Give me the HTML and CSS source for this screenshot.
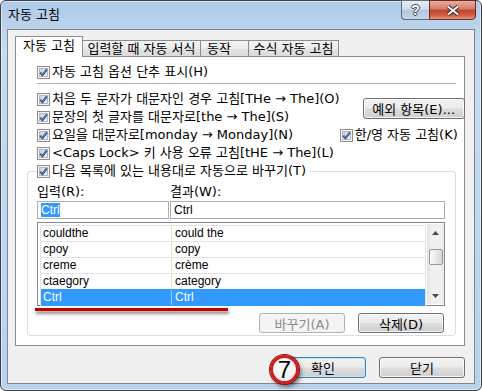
FILE: index.html
```html
<!DOCTYPE html>
<html lang="ko">

<head>
    <meta charset="UTF-8">
    <title>자동 고침</title>
    <link rel="stylesheet" href="styles.css">
</head>

<body>
    <!-- shared checkbox glyph -->
    <svg class="defs" aria-hidden="true">
        <defs>
            <linearGradient id="cbfill" x1="0" y1="0" x2="1" y2="1">
                <stop offset="0" stop-color="#c9ced4" />
                <stop offset="1" stop-color="#f7f7f7" />
            </linearGradient>
            <symbol id="cb" viewBox="0 0 13 13">
                <rect x="0.5" y="0.5" width="12" height="12" fill="#f4f4f4" stroke="#8e8f8f" />
                <rect x="2.5" y="2.5" width="8" height="8" fill="url(#cbfill)" stroke="#b4b9be" />
                <path d="M3.3 6.6 L5.4 9.1 L9.9 3.4" fill="none" stroke="#2f4f90" stroke-width="2.2" stroke-linejoin="round" />
                <path d="M3.8 6.7 L5.4 8.5 L9.5 3.7" fill="none" stroke="#6d9be6" stroke-width="0.8" />
            </symbol>
        </defs>
    </svg>

    <div class="window">
        <!-- Title Bar -->
        <div class="titlebar">
            <span class="title">자동 고침</span>
            <div class="caption">
                <span class="cap-btn help">?</span>
                <span class="cap-btn close">
                    <svg width="14" height="11" viewBox="0 0 14 11">
                        <path d="M2 1.5 L12 9.5 M12 1.5 L2 9.5" stroke="#3d2723" stroke-width="4" />
                        <path d="M2 1.5 L12 9.5 M12 1.5 L2 9.5" stroke="#fff" stroke-width="2" />
                    </svg>
                </span>
            </div>
        </div>

        <div class="client">
            <!-- Tabs -->
            <div class="tabs">
                <div class="tab active t1">자동 고침</div>
                <div class="tab t2">입력할 때 자동 서식</div>
                <div class="tab t3">동작</div>
                <div class="tab t4">수식 자동 고침</div>
            </div>

            <div class="panel">
                <label class="check first"><svg class="cb"><use href="#cb" /></svg>자동 고침 옵션 단추 표시(H)</label>
                <div class="sep"></div>

                <div class="opts">
                    <label class="check r1"><svg class="cb"><use href="#cb" /></svg>처음 두 문자가 대문자인 경우 고침[THe → The](O)</label>
                    <label class="check r2"><svg class="cb"><use href="#cb" /></svg>문장의 첫 글자를 대문자로[the → The](S)</label>
                    <label class="check r3"><svg class="cb"><use href="#cb" /></svg>요일을 대문자로[monday → Monday](N)</label>
                    <label class="check r4"><svg class="cb"><use href="#cb" /></svg>&lt;Caps Lock&gt; 키 사용 오류 고침[tHE → The](L)</label>
                    <button class="btn except">예외 항목(E)...</button>
                    <label class="check hanyoung"><svg class="cb"><use href="#cb" /></svg>한/영 자동 고침(K)</label>
                </div>

                <!-- Replace list group -->
                <fieldset class="group">
                    <legend><label class="check"><svg class="cb"><use href="#cb" /></svg>다음 목록에 있는 내용대로 자동으로 바꾸기(T)</label></legend>

                    <div class="fields">
                        <div class="field-label">입력(R):</div>
                        <div class="field-label second">결과(W):</div>
                        <div class="textbox"><span class="sel">Ctrl</span></div>
                        <div class="textbox second">Ctrl</div>
                    </div>

                    <div class="listbox">
                        <div class="list-area">
                            <div class="list">
                                <div class="row"><span>couldthe</span><span>could the</span></div>
                                <div class="row"><span>cpoy</span><span>copy</span></div>
                                <div class="row"><span>creme</span><span>crème</span></div>
                                <div class="row"><span>ctaegory</span><span>category</span></div>
                                <div class="row selected"><span>Ctrl</span><span>Ctrl</span></div>
                            </div>
                        </div>
                        <div class="scrollbar">
                            <div class="sb-btn">
                                <svg width="7" height="4" viewBox="0 0 7 4"><path d="M0 4 L3.5 0 L7 4 Z" fill="#4a4a4a" /></svg>
                            </div>
                            <div class="sb-thumb"></div>
                            <div class="sb-btn">
                                <svg width="7" height="4" viewBox="0 0 7 4"><path d="M0 0 L3.5 4 L7 0 Z" fill="#4a4a4a" /></svg>
                            </div>
                        </div>
                        <div class="mark"></div>
                    </div>

                    <div class="group-btns">
                        <button class="btn" disabled>바꾸기(A)</button>
                        <button class="btn">삭제(D)</button>
                    </div>
                </fieldset>
            </div>

            <!-- Dialog buttons -->
            <div class="footer">
                <div class="ok-wrap">
                    <button class="btn default">확인</button>
                    <span class="badge">7</span>
                </div>
                <button class="btn">닫기</button>
            </div>
        </div>
    </div>
</body>

</html>
```

FILE: styles.css
```css
* {
    box-sizing: border-box;
}

/* Base */
body {
    margin: 0;
    font-family: "DejaVu Sans", "Noto Sans CJK KR", sans-serif;
    font-size: 13px;
    color: #000;
    background: #fff;
}

.defs {
    position: absolute;
    width: 0;
    height: 0;
}

/* Window frame */
.window {
    width: 482px;
    height: 391px;
    border: 1px solid #3a3f47;
    border-radius: 6px;
    padding: 0 6px 6px;
    background: linear-gradient(180deg, #aecae8 0%, #c5dbf1 12%, #bed6ef 60%, #b9d2ec 100%);
    box-shadow: inset 0 0 0 1px rgba(255, 255, 255, 0.55);
}

.titlebar {
    height: 28px;
    display: flex;
    justify-content: space-between;
    align-items: flex-start;
}

.title {
    line-height: 28px;
    padding-left: 1px;
}

.caption {
    display: flex;
    margin-top: -1px;
    margin-right: -1px;
}

.cap-btn {
    height: 20px;
    display: flex;
    align-items: center;
    justify-content: center;
    border: 1px solid #5d6c80;
}

.help {
    width: 28px;
    border-right: none;
    border-radius: 0 0 0 4px;
    background: linear-gradient(180deg, #e6eef7 0%, #cfdceb 45%, #b4c7dd 52%, #c4d6ea 100%);
    color: #fff;
    font-family: "Liberation Sans", sans-serif;
    font-weight: bold;
    font-size: 14px;
    text-shadow: 1px 0 #3e4858, -1px 0 #3e4858, 0 1px #3e4858, 0 -1px #3e4858;
}

.close {
    width: 47px;
    border-color: #6b2b22;
    border-radius: 0 0 4px 0;
    background: linear-gradient(180deg, #e9ab9d 0%, #d7806f 42%, #c3432b 52%, #cf5e45 80%, #e39a82 100%);
}

/* Client area */
.client {
    height: 355px;
    border: 1px solid #7b8795;
    background: #f0f0f0;
    padding: 6px 9px 0 7px;
}

/* Tabs */
.tabs {
    display: flex;
    align-items: flex-end;
    height: 21px;
    margin-bottom: -1px;
    position: relative;
    z-index: 1;
}

.tab {
    height: 17px;
    border: 1px solid #898c95;
    margin-left: -1px;
    background: linear-gradient(180deg, #f3f3f3 0%, #ececec 50%, #e2e2e2 51%, #dcdcdc 100%);
    line-height: 15px;
    text-align: center;
    white-space: nowrap;
}

.tab.active {
    height: 21px;
    margin-left: 0;
    border-bottom: none;
    background: #fff;
    line-height: 17px;
    position: relative;
    z-index: 2;
}

.t1 { width: 68px; }
.t2 { width: 119px; }
.t3 { width: 49px; padding-right: 11px; }
.t4 { width: 91px; }

.panel {
    width: 450px;
    height: 290px;
    border: 1px solid #898c95;
    background: #fff;
    padding: 6px 8px 0 11px;
}

/* Checkboxes */
.check {
    display: flex;
    align-items: center;
    height: 18px;
    line-height: 18px;
    white-space: nowrap;
}

.cb {
    width: 13px;
    height: 13px;
    flex: none;
    margin-right: 2px;
}

.check.first {
    margin-left: 10px;
}

.sep {
    height: 1px;
    background: #b4b4b4;
    margin: 2px 0 6px 10px;
}

.opts {
    display: grid;
    grid-template-columns: 1fr 126px;
    grid-auto-rows: 18px;
    margin-left: 10px;
}

.r1 { grid-column: 1; grid-row: 1; }
.r2 { grid-column: 1; grid-row: 2; }
.r3 { grid-column: 1; grid-row: 3; }
.r4 { grid-column: 1; grid-row: 4; }

.except {
    grid-column: 2;
    grid-row: 1 / span 2;
    align-self: center;
    justify-self: end;
    width: 102px;
    margin-right: 1px;
}

.hanyoung {
    grid-column: 2;
    grid-row: 3;
}

/* Buttons */
.btn {
    font: inherit;
    color: #000;
    height: 21px;
    padding: 0;
    border: 1px solid #707070;
    border-radius: 3px;
    background: linear-gradient(180deg, #f2f2f2 0%, #ebebeb 48%, #dddddd 52%, #cfcfcf 100%);
    box-shadow: inset 0 0 0 1px rgba(255, 255, 255, 0.75);
}

.btn:disabled {
    color: #8a8a8a;
    border-color: #adb2b5;
    background: #f4f4f4;
    box-shadow: none;
}

.btn.default {
    border-color: #3c7fb1;
    box-shadow: inset 0 0 0 1px #bfe6fb;
}

/* Group box */
.group {
    margin: 0;
    min-inline-size: 0;
    border: 1px solid #d5dfe5;
    border-radius: 3px;
    padding: 0 10px 2px 9px;
}

.group legend {
    padding: 0 4px 0 0;
}

.fields {
    display: grid;
    grid-template-columns: 132px 1fr;
    grid-template-rows: 16px 18px;
    row-gap: 1px;
    margin-top: 4px;
}

.field-label {
    line-height: 16px;
}

.field-label.second {
    padding-left: 1px;
}

.textbox {
    border: 1px solid #a9aeb5;
    background: #fff;
    font-family: "Liberation Sans", sans-serif;
    font-size: 12px;
    line-height: 16px;
    padding-left: 3px;
}

.textbox.second {
    margin-left: 1px;
}

.sel {
    background: #3399ff;
    color: #fff;
}

/* List */
.listbox {
    position: relative;
    display: flex;
    height: 84px;
    margin-top: 3px;
    border: 1px solid #828790;
    background: #fff;
    padding: 1px 0 1px 1px;
    font-family: "Liberation Sans", sans-serif;
    font-size: 12px;
}

.list-area {
    flex: 1;
    padding: 1px 1px 0;
}

.list {
    border: 1px solid #e3e3e3;
    border-bottom: none;
}

.row {
    display: grid;
    grid-template-columns: 131px 1fr;
    height: 16px;
    border-bottom: 1px solid #e3e3e3;
    line-height: 15px;
}

.row span {
    padding-left: 2px;
    white-space: nowrap;
}

.row span:first-child {
    border-right: 1px solid #e3e3e3;
}

.row span + span {
    padding-left: 3px;
}

.row.selected {
    background: #3399ff;
    color: #fff;
    border-bottom-color: #3399ff;
    box-shadow: 0 -1px 0 #3399ff;
}

.row.selected span:first-child {
    border-right-color: #9ccbff;
}

.scrollbar {
    width: 17px;
    display: flex;
    flex-direction: column;
    background: linear-gradient(90deg, #e2e2e2 0%, #efefef 25%, #f1f1f1 75%, #e9e9e9 100%);
}

.sb-btn {
    height: 17px;
    display: flex;
    align-items: center;
    justify-content: center;
}

.sb-thumb {
    height: 16px;
    margin: 8px 1px auto 2px;
    border: 1px solid #979797;
    border-radius: 2px;
    background: linear-gradient(90deg, #fbfbfb 0%, #eaeaea 50%, #d6d6d6 100%);
}

.mark {
    position: absolute;
    left: -3px;
    top: 85px;
    width: 193px;
    height: 3px;
    background: #c00000;
    box-shadow: 1px 3px 3px rgba(0, 0, 0, 0.45);
}

.group-btns {
    display: flex;
    justify-content: flex-end;
    gap: 13px;
    margin-top: 7px;
    margin-right: 1px;
}

.group-btns .btn {
    width: 86px;
    height: 20px;
}

/* Footer */
.footer {
    display: flex;
    justify-content: flex-end;
    gap: 13px;
    margin-top: 11px;
}

.footer .btn {
    width: 86px;
}

.ok-wrap {
    position: relative;
    display: flex;
}

.badge {
    position: absolute;
    left: -10px;
    top: -2px;
    width: 29px;
    height: 29px;
    border-radius: 50%;
    border: 3px solid #d01c1c;
    background: radial-gradient(circle at 40% 35%, #ffffff 0%, #f4f4f4 60%, #dcdcdc 100%);
    box-shadow: 0 0 0 1px #8e1010, 2px 3px 4px rgba(0, 0, 0, 0.5);
    font-family: "Liberation Sans", sans-serif;
    font-size: 24px;
    line-height: 23px;
    text-align: center;
    color: #000;
}
```
